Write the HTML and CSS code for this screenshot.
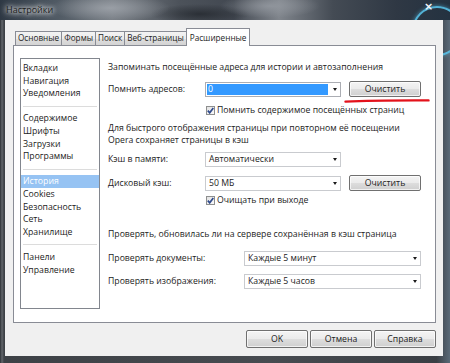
FILE: index.html
```html
<!DOCTYPE html>
<html lang="ru">
<head>
<meta charset="utf-8">
<title>Настройки</title>
<link rel="stylesheet" href="styles.css">
</head>
<body>
<div class="window">
  <div class="titlebar">
    <span class="ring"></span>
    <span class="title">Настройки</span>
    <span class="close">×</span>
  </div>
  <div class="client">
    <div class="tabs">
      <div class="tab">Основные</div>
      <div class="tab">Формы</div>
      <div class="tab">Поиск</div>
      <div class="tab">Веб-страницы</div>
      <div class="tab active">Расширенные</div>
    </div>
    <div class="panel">
      <ul class="list">
        <li>Вкладки</li>
        <li>Навигация</li>
        <li>Уведомления</li>
        <li class="sep"></li>
        <li>Содержимое</li>
        <li>Шрифты</li>
        <li>Загрузки</li>
        <li>Программы</li>
        <li class="sep"></li>
        <li class="selected">История</li>
        <li>Cookies</li>
        <li>Безопасность</li>
        <li>Сеть</li>
        <li>Хранилище</li>
        <li class="sep"></li>
        <li>Панели</li>
        <li>Управление</li>
      </ul>
      <div class="content">
        <p class="text t1">Запоминать посещённые адреса для истории и автозаполнения</p>
        <div class="row r1">
          <span class="label short">Помнить адресов:</span>
          <div class="combo edit"><span class="selfill">0</span><span class="arrow"></span></div>
          <button class="btn">Очистить</button>
          <svg class="mark" width="86" height="6" viewBox="0 0 86 6"><path d="M1.5 3.6 Q 30 2.2 84.5 2.4" fill="none" stroke="#e3121b" stroke-width="2.4" stroke-linecap="round"/></svg>
        </div>
        <div class="check c1"><span class="box"><svg width="7" height="7" viewBox="0 0 7 7"><path d="M0.8 3.6 L2.7 5.8 L6.3 0.9" fill="none" stroke="#2f4a8c" stroke-width="1.7"/></svg></span>Помнить содержимое посещённых страниц</div>
        <p class="text t2">Для быстрого отображения страницы при повторном её посещении<br>Opera сохраняет страницы в кэш</p>
        <div class="row r2">
          <span class="label short">Кэш в памяти:</span>
          <div class="combo"><span class="val">Автоматически</span><span class="arrow"></span></div>
        </div>
        <div class="row r3">
          <span class="label short">Дисковый кэш:</span>
          <div class="combo"><span class="val">50 МБ</span><span class="arrow"></span></div>
          <button class="btn">Очистить</button>
        </div>
        <div class="check c2"><span class="box"><svg width="7" height="7" viewBox="0 0 7 7"><path d="M0.8 3.6 L2.7 5.8 L6.3 0.9" fill="none" stroke="#2f4a8c" stroke-width="1.7"/></svg></span>Очищать при выходе</div>
        <p class="text t3">Проверять, обновилась ли на сервере сохранённая в кэш страница</p>
        <div class="row r4">
          <span class="label long">Проверять документы:</span>
          <div class="combo wide"><span class="val">Каждые 5 минут</span><span class="arrow"></span></div>
        </div>
        <div class="row r5">
          <span class="label long">Проверять изображения:</span>
          <div class="combo wide"><span class="val">Каждые 5 часов</span><span class="arrow"></span></div>
        </div>
      </div>
    </div>
    <div class="buttons">
      <button class="btn big">OK</button>
      <button class="btn big">Отмена</button>
      <button class="btn big">Справка</button>
    </div>
  </div>
</div>
</body>
</html>
```

FILE: styles.css
```css
* { box-sizing: border-box; }
html, body { margin: 0; padding: 0; }
body {
  width: 450px;
  height: 363px;
  overflow: hidden;
  font-family: "Open Sans", "Noto Sans", sans-serif;
  font-size: 8.7px;
  color: #1c1c1c;
  background: #2d3137;
}
.window {
  position: relative;
  width: 450px;
  height: 363px;
  display: flex;
  flex-direction: column;
  overflow: hidden;
  background: linear-gradient(90deg, #2b2f34 0px, #63676c 2px, #3d4146 4px, #474b50 60%, #3a3e44 97%, #5a6a78 100%);
}
.titlebar {
  position: relative;
  height: 20px;
  flex: none;
  background:
    radial-gradient(ellipse 60px 14px at 110px 8px, rgba(160,165,172,.85), rgba(160,165,172,0)),
    radial-gradient(ellipse 50px 12px at 270px 6px, rgba(150,155,162,.8), rgba(150,155,162,0)),
    radial-gradient(ellipse 50px 10px at 200px 14px, rgba(30,34,40,.7), rgba(30,34,40,0)),
    linear-gradient(90deg, #2e3844 0%, #4e5862 12%, #757b82 25%, #4c525a 40%, #424851 52%, #80858c 62%, #444b54 74%, #2f3844 88%, #243240 100%);
}
.ring {
  position: absolute;
  left: 412px;
  top: 6px;
  width: 50px;
  height: 50px;
  border-radius: 50%;
  border: 2px solid rgba(90,200,240,.85);
  box-shadow: 0 0 4px rgba(90,200,240,.6);
}
.title {
  position: absolute;
  left: 6px;
  top: 4px;
  font-size: 9px;
  line-height: 12px;
  color: #1d1d1d;
  text-shadow: 0 0 4px #fff, 0 0 6px rgba(255,255,255,.9), 0 0 8px rgba(255,255,255,.7);
}
.close {
  position: absolute;
  left: 424px;
  top: 1px;
  font-family: "DejaVu Sans", sans-serif;
  font-size: 11px;
  font-weight: bold;
  line-height: 12px;
  color: #f4f6f8;
}
.client {
  position: relative;
  flex: 1;
  margin: 0 7px 7px 5px;
  background: #f0f0f0;
  padding: 8px 7px 0 8px;
  display: flex;
  flex-direction: column;
}
.tabs {
  display: flex;
  align-items: flex-end;
  padding-left: 2px;
  height: 17px;
  position: relative;
  z-index: 2;
}
.tab {
  flex: none;
  height: 14px;
  line-height: 12px;
  padding: 0 2px;
  font-size: 8.2px;
  border: 1px solid #898c95;
  border-bottom: none;
  margin-right: -1px;
  background: linear-gradient(#f3f3f3, #ebebeb 50%, #dedede 51%, #d4d4d4);
  white-space: nowrap;
  text-align: center;
}
.tab.active {
  height: 18px;
  margin-bottom: -1px;
  line-height: 16px;
  padding: 1px 3px 0;
  background: #fff;
}
.panel {
  height: 278px;
  background: #fff;
  border: 1px solid #898c95;
  padding: 12px 14px 13px 6px;
  display: flex;
}
.list {
  list-style: none;
  margin: 0;
  width: 80px;
  flex: none;
  border: 1px solid #82868e;
  padding: 3px 0 0;
}
.list li {
  height: 12.6px;
  line-height: 12.6px;
  padding-left: 2px;
  white-space: nowrap;
}
.list li.sep {
  position: relative;
}
.list li.sep::after {
  content: "";
  position: absolute;
  left: 2px;
  right: 2px;
  top: 6px;
  border-top: 1px solid #dcdcdc;
}
.list li.selected {
  background: #96c3f3;
  color: #fff;
}
.content {
  flex: 1;
  margin-left: 8px;
  padding-top: 3px;
  display: flex;
  flex-direction: column;
}
.text {
  margin: 0;
  line-height: 12px;
  white-space: nowrap;
}
.t2 { margin-top: 7px; line-height: 11.5px; }
.t3 { margin-top: 22px; }
.row {
  position: relative;
  display: flex;
  align-items: center;
  height: 16px;
}
.r1 { margin-top: 8px; }
.r2 { margin-top: 5px; }
.r3 { margin-top: 8px; }
.r4 { margin-top: 10px; }
.r5 { margin-top: 7px; }
.label { flex: none; white-space: nowrap; }
.label.short { width: 97px; }
.label.long { width: 136px; }
.combo {
  position: relative;
  width: 136px;
  height: 15px;
  border: 1px solid #c9cbcf;
  background: #fff;
  padding-left: 3px;
  line-height: 13px;
  display: flex;
  align-items: center;
}
.combo.wide { width: 177px; }
.combo.edit {
  border-color: #abadb3;
  padding: 1px 12px 1px 1px;
}
.selfill {
  flex: 1;
  height: 11px;
  line-height: 11px;
  background: #3399ff;
  color: #fff;
  padding-left: 1px;
}
.arrow {
  position: absolute;
  right: 3px;
  top: 5px;
  width: 0;
  height: 0;
  border-left: 2.5px solid transparent;
  border-right: 2.5px solid transparent;
  border-top: 3px solid #1a1a1a;
}
.btn {
  font: inherit;
  color: #1c1c1c;
  width: 72px;
  height: 16px;
  margin-left: 8px;
  padding: 0;
  border: 1px solid #707070;
  border-radius: 2px;
  background: linear-gradient(#f4f4f4, #ebebeb 48%, #dddddd 52%, #cfcfcf);
  box-shadow: inset 0 0 0 1px rgba(255,255,255,.7);
  line-height: 13px;
}
.mark {
  position: absolute;
  left: 236px;
  top: 17px;
}
.check {
  display: flex;
  align-items: center;
  padding-left: 98px;
  height: 12px;
  line-height: 12px;
  white-space: nowrap;
}
.c1 { margin-top: 7px; }
.c2 { margin-top: 3px; }
.box {
  width: 9px;
  height: 9px;
  border: 1px solid #8e8f8f;
  background: linear-gradient(135deg, #e2e2e2, #fafafa);
  display: flex;
  align-items: center;
  justify-content: center;
  margin-right: 2px;
  flex: none;
}
.box svg { display: block; }
.buttons {
  display: flex;
  justify-content: flex-end;
  gap: 2px;
  margin-top: 7px;
}
.btn.big {
  width: 62px;
  height: 18px;
  margin-left: 0;
}
```
